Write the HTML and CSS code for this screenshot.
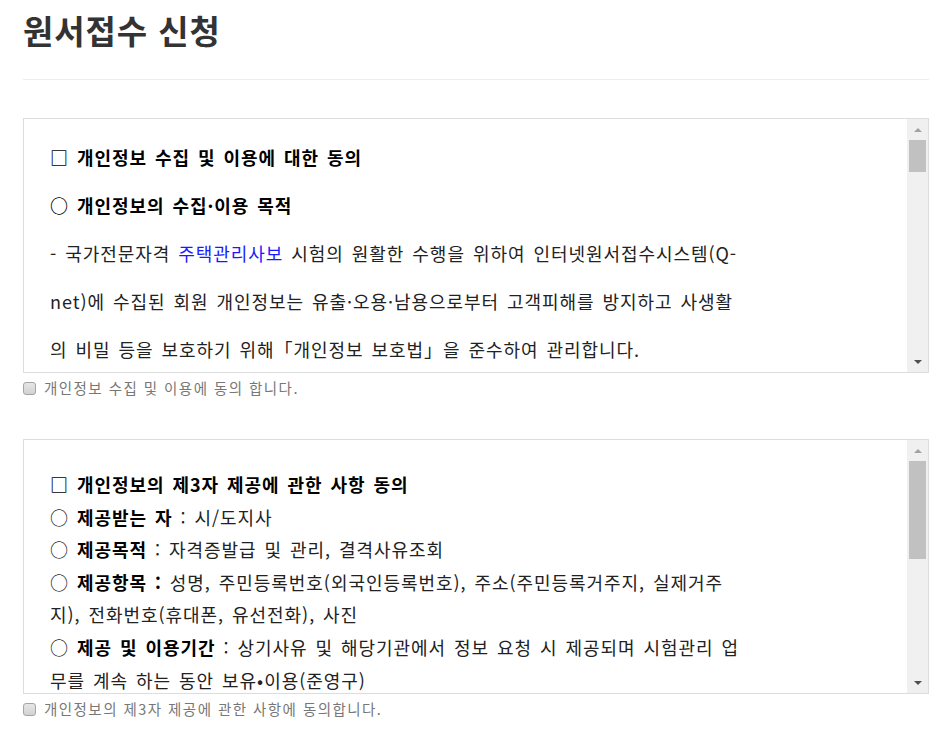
FILE: index.html
```html
<!DOCTYPE html>
<html lang="ko">
<head>
<meta charset="utf-8">
<title>원서접수 신청</title>
<link rel="stylesheet" href="styles.css">
</head>
<body>
<div class="page">
  <h2 class="title">원서접수 신청</h2>
  <hr class="rule">

  <section class="agree">
    <div class="box">
      <div class="box-body box-body--wide">
        <p class="strong">□ 개인정보 수집 및 이용에 대한 동의</p>
        <p class="strong">○ 개인정보의 수집·이용 목적</p>
        <p>- 국가전문자격 <span class="link">주택관리사보</span> 시험의 원활한 수행을 위하여 인터넷원서접수시스템(Q-<br>net)에 수집된 회원 개인정보는 유출·오용·남용으로부터 고객피해를 방지하고 사생활<br>의 비밀 등을 보호하기 위해「개인정보 보호법」을 준수하여 관리합니다.</p>
      </div>
      <div class="scrollbar">
        <div class="sb-btn"><span class="arrow-up"></span></div>
        <div class="sb-track"><div class="sb-thumb sb-thumb--small"></div></div>
        <div class="sb-btn"><span class="arrow-down"></span></div>
      </div>
    </div>
    <label class="check"><input type="checkbox"> 개인정보 수집 및 이용에 동의 합니다.</label>
  </section>

  <section class="agree">
    <div class="box">
      <div class="box-body box-body--tight">
        <p class="strong">□ 개인정보의 제3자 제공에 관한 사항 동의</p>
        <p>○ <b>제공받는 자</b> : 시/도지사</p>
        <p>○ <b>제공목적</b> : 자격증발급 및 관리, 결격사유조회</p>
        <p>○ <b>제공항목 :</b> 성명, 주민등록번호(외국인등록번호), 주소(주민등록거주지, 실제거주<br>지), 전화번호(휴대폰, 유선전화), 사진</p>
        <p>○ <b>제공 및 이용기간</b> : 상기사유 및 해당기관에서 정보 요청 시 제공되며 시험관리 업<br>무를 계속 하는 동안 보유•이용(준영구)</p>
      </div>
      <div class="scrollbar">
        <div class="sb-btn"><span class="arrow-up"></span></div>
        <div class="sb-track"><div class="sb-thumb sb-thumb--large"></div></div>
        <div class="sb-btn"><span class="arrow-down"></span></div>
      </div>
    </div>
    <label class="check"><input type="checkbox"> 개인정보의 제3자 제공에 관한 사항에 동의합니다.</label>
  </section>
</div>
</body>
</html>
```

FILE: styles.css
```css
* { box-sizing: border-box; }

html, body {
  margin: 0;
  padding: 0;
  background: #fff;
}

body {
  font-family: "Noto Sans CJK KR", "Noto Sans", sans-serif;
  color: #222;
}

.page {
  margin-left: 23px;
  width: 906px;
}

.title {
  margin: 0;
  padding-top: 8px;
  font-size: 33px;
  line-height: 45px;
  font-weight: 700;
  letter-spacing: 0.9px;
  color: #333;
}

.rule {
  margin: 26px 0 0;
  border: 0;
  border-top: 1px solid #eee;
  height: 0;
}

.agree {
  margin-top: 38px;
}

.agree + .agree {
  margin-top: 41px;
}

.box {
  display: flex;
  height: 255px;
  border: 1px solid #ddd;
  background: #fff;
}

.box-body {
  flex: 1;
  overflow: hidden;
  padding-left: 26px;
  font-size: 18px;
  word-spacing: 2px;
  letter-spacing: 0.95px;
}

.box-body p {
  margin: 0;
  width: 780px;
}

.box-body--wide {
  padding-top: 14px;
  line-height: 48px;
}

.box-body--tight {
  padding-top: 28px;
  line-height: 32.6px;
}

.strong,
.box-body b {
  font-weight: 700;
  color: #000;
}

.link {
  color: #1a1aff;
}

.scrollbar {
  width: 21px;
  flex: 0 0 21px;
  background: #f0f0f0;
  display: flex;
  flex-direction: column;
}

.sb-btn {
  height: 21px;
  flex: 0 0 21px;
  display: flex;
  align-items: center;
  justify-content: center;
}

.sb-track {
  flex: 1;
  padding: 0 2px;
}

.sb-thumb {
  background: #c1c1c1;
  width: 17px;
}

.sb-thumb--small { height: 32px; }
.sb-thumb--large { height: 98px; }

.arrow-up {
  width: 0;
  height: 0;
  border-left: 4px solid transparent;
  border-right: 4px solid transparent;
  border-bottom: 4px solid #a3a3a3;
}

.arrow-down {
  width: 0;
  height: 0;
  border-left: 4px solid transparent;
  border-right: 4px solid transparent;
  border-top: 4px solid #505050;
}

.check {
  display: flex;
  align-items: center;
  gap: 8px;
  margin-top: 5px;
  font-size: 14.5px;
  line-height: 20px;
  color: #777;
  letter-spacing: 1.45px;
}

.check input {
  appearance: none;
  -webkit-appearance: none;
  margin: 0;
  width: 13px;
  height: 13px;
  border: 1px solid #a5a5a5;
  border-radius: 3px;
  background: linear-gradient(#e6e6e6, #d2d2d2);
}
```
